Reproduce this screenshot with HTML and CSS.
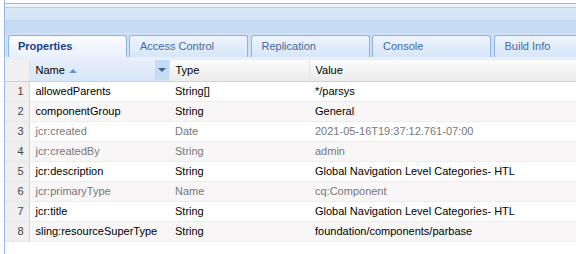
FILE: index.html
```html
<!DOCTYPE html>
<html lang="en">
<head>
  <meta charset="UTF-8">
  <title>Properties</title>
  <link rel="stylesheet" href="styles.css">
</head>
<body>
  <div class="above"></div>
  <div class="panel">
    <div class="gap"></div>
    <div class="header"></div>
    <ul class="tabs">
      <li class="tab active">Properties</li>
      <li class="tab">Access Control</li>
      <li class="tab">Replication</li>
      <li class="tab">Console</li>
      <li class="tab">Build Info</li>
    </ul>
    <table class="grid">
      <colgroup>
        <col class="c-num"><col class="c-name"><col class="c-type"><col>
      </colgroup>
      <thead>
        <tr>
          <th class="num"></th>
          <th class="sorted"><span>Name</span><i class="sort-up"></i><b class="trigger"><i></i></b></th>
          <th>Type</th>
          <th>Value</th>
        </tr>
      </thead>
      <tbody>
        <tr><td class="num">1</td><td>allowedParents</td><td>String[]</td><td>*/parsys</td></tr>
        <tr class="alt"><td class="num">2</td><td>componentGroup</td><td>String</td><td>General</td></tr>
        <tr class="prot"><td class="num">3</td><td>jcr:created</td><td>Date</td><td>2021-05-16T19:37:12.761-07:00</td></tr>
        <tr class="alt prot"><td class="num">4</td><td>jcr:createdBy</td><td>String</td><td>admin</td></tr>
        <tr><td class="num">5</td><td>jcr:description</td><td>String</td><td>Global Navigation Level Categories- HTL</td></tr>
        <tr class="alt prot"><td class="num">6</td><td>jcr:primaryType</td><td>Name</td><td>cq:Component</td></tr>
        <tr><td class="num">7</td><td>jcr:title</td><td>String</td><td>Global Navigation Level Categories- HTL</td></tr>
        <tr class="alt"><td class="num">8</td><td>sling:resourceSuperType</td><td>String</td><td>foundation/components/parbase</td></tr>
      </tbody>
    </table>
  </div>
</body>
</html>
```

FILE: styles.css
```css
:root {
  --border: #99bbe8;
  --tab-text: #15428b;
  --grid-line: #ededed;
}
* { box-sizing: border-box; margin: 0; padding: 0; }
body { background: #fff; font-family: 'Liberation Sans', Arial, sans-serif; font-size: 11px; overflow: hidden; }
.above { height: 4px; margin-left: 4px; border-left: 1px solid var(--border); border-bottom: 1px solid var(--border); }
.panel { margin-left: 4px; border-left: 1px solid var(--border); height: 250px; overflow: hidden; }
.gap { height: 4px; background: #eef4fb; border-bottom: 1px solid #b5cdec; }
.header { height: 25px; background: linear-gradient(#dae7f7 0, #d6e5f7 45%, #c6dbf3 50%, #c6dbf3 100%); }
.tabs { list-style: none; display: flex; gap: 2.5px; height: 27px; padding: 2px 0 0 3px; background: #cfe0f5; border-bottom: 3px solid #e6effb; overflow: hidden; }
.tab { flex: 0 0 119px; height: 22px; line-height: 20px; padding-left: 10px; color: #416aa3; border: 1px solid #8db2e3; border-bottom: none; border-radius: 3px 3px 0 0; background: linear-gradient(#eef4fc, #d7e6f8); white-space: nowrap; overflow: hidden; font-family: 'Liberation Sans', Tahoma, sans-serif; }
.tab.active { flex-basis: 118.5px; padding-left: 9px; font-weight: 700; color: var(--tab-text); background: linear-gradient(#fafcff, #e8f1fc); }
.grid { width: 100%; border-collapse: collapse; table-layout: fixed; }
.c-num { width: 24px; }
.c-name { width: 140px; }
.c-type { width: 140px; }
.grid th { height: 21px; text-align: left; font-weight: 400; color: #000; padding: 0 6px; background: linear-gradient(#fbfbfb, #ebebeb); border-left: 1px solid #e2e2e2; border-bottom: 1px solid #d6cfcf; position: relative; white-space: nowrap; }
.grid th.num { background: #f0f0f0; border-left: none; }
.grid th.sorted { background: linear-gradient(#e5eef9, #d8e6f8); }
.sort-up { display: inline-block; margin-left: 4px; vertical-align: 1px; border: 4px solid transparent; border-top: none; border-bottom: 4px solid #6c94cc; }
.trigger { position: absolute; right: 0; top: 0; width: 14px; height: 20px; background: #c5dbf6; display: flex; align-items: center; justify-content: center; }
.trigger i { border: 4px solid transparent; border-bottom: none; border-top: 4px solid #3f6399; }
.grid td { height: 20px; padding: 0 6px; color: #000; border-bottom: 1px solid var(--grid-line); white-space: nowrap; overflow: hidden; }
.grid tr.alt td { background: #f8f6f6; }
.grid tr.prot td { color: #777; }
.grid td.num, .grid tr.alt td.num, .grid tr.prot td.num { background: #efefef; color: #444; text-align: right; padding: 0 5px 0 0; border-right: 1px solid #d8d2d2; border-bottom-color: #e6e6e6; }
```
